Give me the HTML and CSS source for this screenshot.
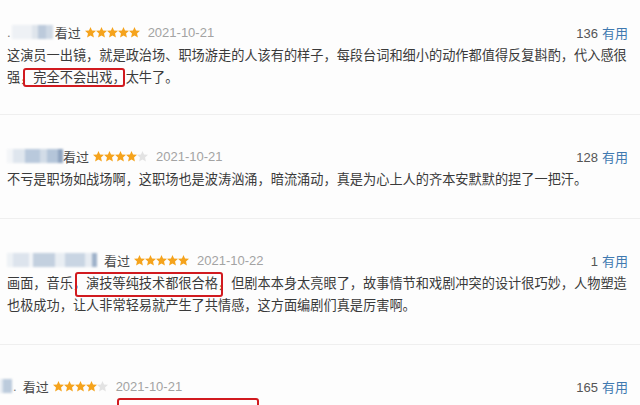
FILE: index.html
```html
<!DOCTYPE html>
<html lang="zh-CN">
<head>
    <meta charset="UTF-8">
    <meta name="viewport" content="width=device-width, initial-scale=1.0">
    <title>短评</title>
    <link rel="stylesheet" href="styles.css">
</head>
<body>

    <svg class="defs" width="0" height="0">
        <symbol id="star" viewBox="0 0 10 10">
            <polygon points="5,0 6.4,3.2 10,3.5 7.3,5.9 8.1,9.6 5,7.7 1.9,9.6 2.7,5.9 0,3.5 3.6,3.2"/>
        </symbol>
    </svg>

    <div class="list">
        <div class="comment">
            <div class="meta">
                <div class="who">
                    <span class="dot">.</span>
                    <span class="name name-1"></span>
                    <span class="seen">看过</span>
                    <svg class="stars" width="55" height="11">
                        <use href="#star" x="0" width="11" height="11" class="on"/>
                        <use href="#star" x="11" width="11" height="11" class="on"/>
                        <use href="#star" x="22" width="11" height="11" class="on"/>
                        <use href="#star" x="33" width="11" height="11" class="on"/>
                        <use href="#star" x="44" width="11" height="11" class="on"/>
                    </svg>
                    <span class="date">2021-10-21</span>
                </div>
                <div class="votes">136<a href="#" class="useful">有用</a></div>
            </div>
            <p class="text">这演员一出镜，就是政治场、职场游走的人该有的样子，每段台词和细小的动作都值得反复斟酌，代入感很强<span class="mark mark-1">，完全不会出戏，</span>太牛了。</p>
        </div>

        <div class="comment">
            <div class="meta">
                <div class="who">
                    <span class="name name-2"></span>
                    <span class="seen">看过</span>
                    <svg class="stars" width="55" height="11">
                        <use href="#star" x="0" width="11" height="11" class="on"/>
                        <use href="#star" x="11" width="11" height="11" class="on"/>
                        <use href="#star" x="22" width="11" height="11" class="on"/>
                        <use href="#star" x="33" width="11" height="11" class="on"/>
                        <use href="#star" x="44" width="11" height="11" class="off"/>
                    </svg>
                    <span class="date">2021-10-21</span>
                </div>
                <div class="votes">128<a href="#" class="useful">有用</a></div>
            </div>
            <p class="text">不亏是职场如战场啊，这职场也是波涛汹涌，暗流涌动，真是为心上人的齐本安默默的捏了一把汗。</p>
        </div>

        <div class="comment">
            <div class="meta">
                <div class="who">
                    <span class="name name-3"></span>
                    <span class="seen">看过</span>
                    <svg class="stars" width="55" height="11">
                        <use href="#star" x="0" width="11" height="11" class="on"/>
                        <use href="#star" x="11" width="11" height="11" class="on"/>
                        <use href="#star" x="22" width="11" height="11" class="on"/>
                        <use href="#star" x="33" width="11" height="11" class="on"/>
                        <use href="#star" x="44" width="11" height="11" class="on"/>
                    </svg>
                    <span class="date">2021-10-22</span>
                </div>
                <div class="votes">1<a href="#" class="useful">有用</a></div>
            </div>
            <p class="text">画面，音乐<span class="mark mark-3">，演技等纯技术都很合格</span>，但剧本本身太亮眼了，故事情节和戏剧冲突的设计很巧妙，人物塑造也极成功，让人非常轻易就产生了共情感，这方面编剧们真是厉害啊。</p>
        </div>

        <div class="comment">
            <div class="meta">
                <div class="who">
                    <span class="name name-4"></span>
                    <span class="dot dot-4">.</span>
                    <span class="seen">看过</span>
                    <svg class="stars" width="55" height="11">
                        <use href="#star" x="0" width="11" height="11" class="on"/>
                        <use href="#star" x="11" width="11" height="11" class="on"/>
                        <use href="#star" x="22" width="11" height="11" class="on"/>
                        <use href="#star" x="33" width="11" height="11" class="on"/>
                        <use href="#star" x="44" width="11" height="11" class="off"/>
                    </svg>
                    <span class="date">2021-10-21</span>
                </div>
                <div class="votes">165<a href="#" class="useful">有用</a></div>
            </div>
            <p class="text"><span class="mark mark-blank"></span></p>
        </div>
    </div>

</body>
</html>
```

FILE: styles.css
```css
/* Global Styles */
body {
    margin: 0;
    background: #fdfdfd;
    font-family: "Liberation Sans", "Noto Sans CJK SC", sans-serif;
    color: #494949;
    overflow: hidden;
}

.defs {
    position: absolute;
}

.comment {
    padding: 31px 12px 27px 7px;
    border-bottom: 1px solid #efefef;
}

.comment:first-child {
    padding-top: 22px;
    padding-bottom: 25px;
}

/* Header row */
.meta {
    display: flex;
    justify-content: space-between;
    align-items: center;
    height: 20px;
    font-size: 13px;
}

.who {
    display: flex;
    align-items: center;
}

.dot {
    color: #777;
    margin-right: 1px;
}

.dot-4 {
    margin: 0 6px 0 1px;
}

.name {
    display: block;
    height: 14px;
    filter: blur(1.3px);
}

.name-1 {
    width: 41px;
    margin-right: 2px;
    background: linear-gradient(90deg, #eef1f5 0 20px, #dfe5ec 20px 26px, #bccadb 26px 34px, #cfd9e5 34px 41px);
}

.name-2 {
    width: 56px;
    background: linear-gradient(90deg, #f3f5f8 0 6px, #dfe6ee 6px 18px, #b9c9dc 18px 33px, #d2dce7 33px 40px, #b4c5d9 40px 51px, #8ea3bf 51px 56px);
}

.name-3 {
    width: 90px;
    margin-right: 7px;
    background: linear-gradient(90deg, #eef2f6 0 6px, #dde4ed 6px 22px, #f3f5f8 22px 26px, #c3d0df 26px 48px, #e9eef3 48px 58px, #c9d5e3 58px 78px, #e7ecf2 78px 85px, #9fb2ca 85px 90px);
}

.name-4 {
    width: 12px;
    margin-left: -7px;
    background: linear-gradient(90deg, #e4eaf1 0 3px, #bccbdc 3px 12px);
}

.seen {
    color: #494949;
}

.stars {
    margin: 0 4px;
}

.stars .on {
    fill: #f5a31c;
}

.stars .off {
    fill: #e3e3e3;
}

.date {
    margin-left: 4px;
    color: #a3a3a3;
}

.votes {
    color: #555;
}

.useful {
    margin-left: 4px;
    color: #3f79b0;
    text-decoration: none;
}

/* Comment body */
.text {
    margin: 3px 0 0;
    font-size: 13.2px;
    line-height: 22px;
    color: #3a3a3a;
}

.mark {
    position: relative;
}

.mark::after {
    content: "";
    position: absolute;
    border: 2px solid #d11a1f;
    border-radius: 3px;
}

.mark-1::after {
    top: -2px;
    bottom: -2px;
    left: 3px;
    right: 1px;
}

.mark-3::after {
    top: -4px;
    bottom: -6px;
    left: 2px;
    right: -5px;
}

.mark-blank {
    display: inline-block;
    width: 142px;
    height: 15px;
    margin-left: 110px;
    vertical-align: -3px;
}

.mark-blank::after {
    top: -4px;
    bottom: -6px;
    left: 0;
    right: 0;
}
```
